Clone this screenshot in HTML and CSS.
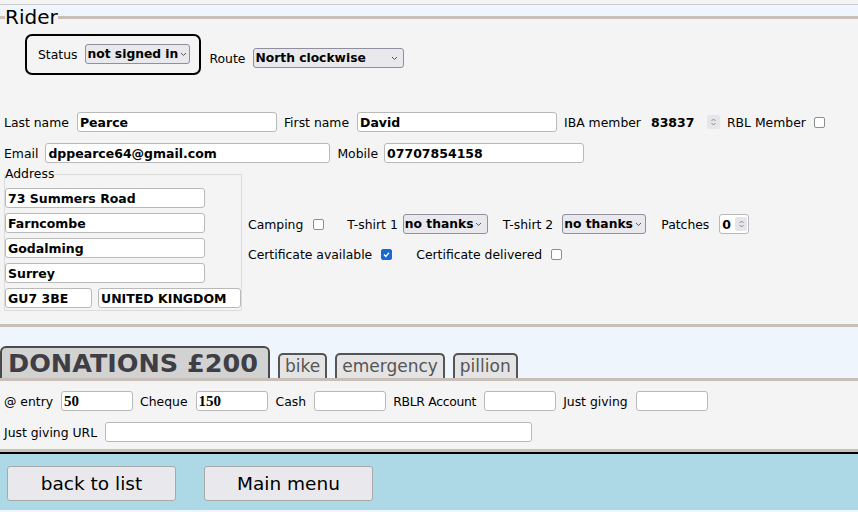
FILE: index.html
```html
<!DOCTYPE html>
<html>
<head>
<meta charset="utf-8">
<title>Rider</title>
<link rel="stylesheet" href="styles.css">
</head>
<body>
<div class="topstrip"></div>
<fieldset class="rider">
  <legend class="rider-legend">Rider</legend>
  <div class="statusrow">
    <div class="statusbox">
      <span class="lbl">Status</span>
      <span class="sel sel-status"><span class="sel-text">not signed in</span><svg class="chev" width="7" height="5" viewBox="0 0 7 5"><polyline points="1,1 3.5,3.5 6,1" fill="none" stroke="#555" stroke-width="1"/></svg></span>
    </div>
    <div class="routegrp">
      <span class="lbl">Route</span>
      <span class="sel sel-route"><span class="sel-text">North clockwise</span><svg class="chev" width="7" height="5" viewBox="0 0 7 5"><polyline points="1,1 3.5,3.5 6,1" fill="none" stroke="#555" stroke-width="1"/></svg></span>
    </div>
  </div>

  <div class="row row1">
    <span class="lbl">Last name</span><input class="txt w200 fld" value="Pearce">
    <span class="lbl">First name</span><input class="txt w200 fld" value="David">
    <span class="lbl lbl-iba">IBA member</span>
    <span class="numro fld"><span class="numval">83837</span><span class="spin"><svg width="7" height="10" viewBox="0 0 7 10"><polyline points="1.5,4 3.5,2 5.5,4" fill="none" stroke="#8a8a8a" stroke-width="1"/><polyline points="1.5,6 3.5,8 5.5,6" fill="none" stroke="#8a8a8a" stroke-width="1"/></svg></span></span>
    <span class="lbl lbl-rbl">RBL Member</span><span class="cb"></span>
  </div>

  <div class="row row2">
    <span class="lbl lbl-email">Email</span><input class="txt w-email fld" value="dppearce64@gmail.com">
    <span class="lbl lbl-mobile">Mobile</span><input class="txt w200 fld" value="07707854158">
  </div>

  <div class="addrsection">
    <fieldset class="address">
      <legend class="addr-legend">Address</legend>
      <input class="txt w200" value="73 Summers Road">
      <input class="txt w200" value="Farncombe">
      <input class="txt w200" value="Godalming">
      <input class="txt w200" value="Surrey">
      <div class="addr-last">
        <input class="txt w-pc" value="GU7 3BE">
        <input class="txt w-country" value="UNITED KINGDOM">
      </div>
    </fieldset>
    <div class="extras">
      <div class="xrow">
        <span class="lbl lbl-camping">Camping</span><span class="cb cb-gap"></span>
        <span class="lbl lbl-ts1">T-shirt 1</span><span class="sel sel-tshirt1 fld-ts1"><span class="sel-text">no thanks</span><svg class="chev" width="7" height="5" viewBox="0 0 7 5"><polyline points="1,1 3.5,3.5 6,1" fill="none" stroke="#555" stroke-width="1"/></svg></span>
        <span class="lbl lbl-ts2">T-shirt 2</span><span class="sel sel-tshirt2 fld-ts2"><span class="sel-text">no thanks</span><svg class="chev" width="7" height="5" viewBox="0 0 7 5"><polyline points="1,1 3.5,3.5 6,1" fill="none" stroke="#555" stroke-width="1"/></svg></span>
        <span class="lbl lbl-patches">Patches</span>
        <span class="numbox"><span class="numval">0</span><span class="spin spin-in"><svg width="7" height="10" viewBox="0 0 7 10"><polyline points="1.5,4 3.5,2 5.5,4" fill="none" stroke="#8a8a8a" stroke-width="1"/><polyline points="1.5,6 3.5,8 5.5,6" fill="none" stroke="#8a8a8a" stroke-width="1"/></svg></span></span>
      </div>
      <div class="xrow">
        <span class="lbl lbl-cert">Certificate available</span><span class="cb cb-on cb-gap2"><svg width="9" height="9" viewBox="0 0 9 9"><polyline points="2,4.6 3.8,6.4 7,2.8" fill="none" stroke="#fff" stroke-width="1.4"/></svg></span>
        <span class="lbl lbl-cert">Certificate delivered</span><span class="cb"></span>
      </div>
    </div>
  </div>
</fieldset>

<div class="tabs">
  <div class="tab tab-main">DONATIONS £200</div>
  <div class="tab tab-small">bike</div>
  <div class="tab tab-small">emergency</div>
  <div class="tab tab-small">pillion</div>
</div>
<div class="panel">
  <div class="row">
    <span class="lbl">@ entry</span><input class="txt serif w72 fld" value="50">
    <span class="lbl">Cheque</span><input class="txt serif w72 fld fld-wide" value="150">
    <span class="lbl">Cash</span><input class="txt serif w72 fld" value="">
    <span class="lbl lbl-rblr">RBLR Account</span><input class="txt serif w72 fld" value="">
    <span class="lbl">Just giving</span><input class="txt serif w72 fld" value="">
  </div>
  <div class="row row-url">
    <span class="lbl">Just giving URL</span><input class="txt w-url" value="">
  </div>
</div>
<div class="footer">
  <button class="btn">back to list</button>
  <button class="btn">Main menu</button>
</div>
</body>
</html>
```

FILE: styles.css
```css
html, body {
  margin: 0;
  padding: 0;
}
body {
  background: #eef5fd;
  font-family: "DejaVu Sans", Verdana, sans-serif;
  font-size: 12.4px;
  color: #000;
  width: 858px;
  overflow: hidden;
}
.topstrip {
  height: 4px;
  background: #f4f4f4;
  border-bottom: 1px solid #cbcbcb;
}
.rider {
  margin: 1px 0 0 0;
  padding: 0 0 13px 0;
  border: 3px solid #c8c0b8;
  border-left: 0;
  border-right: 0;
  background: #f4f4f4;
  min-width: 0;
}
.rider-legend {
  margin-left: 5px;
  padding: 0;
  font-size: 20px;
  line-height: 22px;
}
.txt {
  box-sizing: border-box;
  height: 20px;
  margin: 0;
  padding: 0 2px;
  border: 1px solid #b9b9b9;
  border-radius: 3px;
  background: #fff;
  font-family: "DejaVu Sans", Verdana, sans-serif;
  font-weight: bold;
  font-size: 12.5px;
  color: #000;
  outline: none;
}
.txt.serif {
  font-family: "Liberation Serif", "Times New Roman", serif;
  font-size: 15px;
}
.lbl {
  margin-right: 8px;
  white-space: nowrap;
  line-height: 15px;
  padding-top: 1px;
}
.row .fld { margin-right: 7px; }
.row .fld-wide { margin-right: 8px; }
.statusrow {
  display: flex;
  align-items: flex-start;
  padding-left: 25px;
  margin-top: 6px;
}
.statusbox {
  display: flex;
  align-items: center;
  border: 2px solid #000;
  border-radius: 7px;
  padding: 8px 9px 9px 11px;
  margin-right: 8px;
}
.routegrp {
  display: flex;
  align-items: center;
  margin-top: 14px;
}
.sel {
  display: inline-flex;
  align-items: center;
  justify-content: space-between;
  box-sizing: border-box;
  height: 20px;
  padding: 0 5px 0 1px;
  background: #e9e9ed;
  border: 1px solid #8f8f9d;
  border-radius: 3px;
  font-weight: bold;
  font-size: 12.3px;
  white-space: nowrap;
}
.chev { margin-left: 2px; flex: none; }
.sel-status { width: 105px; }
.sel-route { width: 151px; }
.sel-tshirt1 { width: 85px; }
.sel-tshirt2 { width: 84px; }
.row {
  display: flex;
  align-items: center;
  padding-left: 4px;
  height: 20px;
}
.row1 { margin-top: 37px; }
.row2 { margin-top: 11px; }
.w200 { width: 200px; }
.w-email { width: 285px; }
.w-pc { width: 87px; }
.w-country { width: 143px; }
.w72 { width: 72px; }
.w-url { width: 427px; }
.lbl-iba { margin-right: 10px; }
.lbl-rbl { margin-right: 8px; }
.lbl-email { margin-right: 7px; }
.lbl-mobile { margin-right: 6px; }
.lbl-camping { margin-right: 10px; }
.lbl-ts1 { margin-right: 5px; }
.lbl-ts2 { margin-right: 9px; }
.lbl-patches { margin-right: 10px; }
.lbl-cert { margin-right: 9px; }
.lbl-rblr { letter-spacing: -0.3px; }
.numro {
  display: inline-flex;
  align-items: center;
  width: 69px;
  height: 20px;
  font-weight: bold;
  font-size: 12.5px;
}
.numval { flex: 1; }
.spin {
  display: inline-flex;
  align-items: center;
  justify-content: center;
  width: 13px;
  height: 14px;
  background: #e6e6ea;
  border-radius: 2px;
}
.cb {
  display: inline-flex;
  align-items: center;
  justify-content: center;
  box-sizing: border-box;
  width: 11px;
  height: 11px;
  border: 1px solid #8d8d8d;
  border-radius: 2px;
  background: #fff;
  flex: none;
}
.cb-on {
  background: #1769d6;
  border-color: #1769d6;
}
.cb-gap { margin-right: 23px; }
.cb-gap2 { margin-right: 24px; }
.addrsection {
  display: flex;
  align-items: center;
  margin-top: 4px;
}
.address {
  margin: 0 0 0 4px;
  padding: 7px 0 2px 0;
  border: 1px solid #dcdcdc;
  display: flex;
  flex-direction: column;
  gap: 5px;
  min-width: 0;
}
.addr-legend {
  padding: 0;
  margin: 0;
  line-height: 14px;
}
.addr-last {
  display: flex;
  gap: 6px;
}
.extras {
  display: flex;
  flex-direction: column;
  gap: 10px;
  margin-left: 6px;
}
.xrow {
  display: flex;
  align-items: center;
  height: 20px;
}
.fld-ts1 { margin-right: 15px; }
.fld-ts2 { margin-right: 15px; }
.numbox {
  display: inline-flex;
  align-items: center;
  box-sizing: border-box;
  width: 30px;
  height: 20px;
  padding: 0 1px 0 2px;
  background: #fff;
  border: 1px solid #b9b9b9;
  border-radius: 3px;
  font-weight: bold;
  font-size: 12.5px;
}
.spin-in { width: 12px; }
.tabs {
  display: flex;
  align-items: flex-end;
  margin-top: 19px;
  gap: 8px;
}
.tab {
  box-sizing: border-box;
  border: 2px solid #4a4a4a;
  border-bottom: 0;
  border-radius: 6px 6px 0 0;
  white-space: nowrap;
}
.tab-main {
  width: 270px;
  height: 32px;
  padding: 0 0 0 6px;
  background: #d2d2d2;
  color: #3e3e44;
  font-weight: bold;
  font-size: 25.5px;
  line-height: 30px;
}
.tab-small {
  height: 25px;
  padding: 0 5px;
  background: #e4e4e4;
  color: #555;
  font-size: 17px;
  line-height: 23px;
  border-color: #555;
  border-radius: 5px 5px 0 0;
}
.panel {
  background: #f4f4f4;
  border-top: 3px solid #c8c0b8;
  border-bottom: 3px solid #c8c0b8;
  padding: 10px 0 7px 0;
}
.row-url { margin-top: 11px; }
.footer {
  box-sizing: border-box;
  background: #add8e6;
  border-top: 2px solid #000;
  padding: 12px 7px 0;
  display: flex;
  align-items: flex-start;
  gap: 28px;
  height: 58px;
}
.btn {
  box-sizing: border-box;
  width: 169px;
  height: 35px;
  margin: 0;
  padding: 0;
  background: #e9e9ed;
  border: 1px solid #a9a9a9;
  border-radius: 3px;
  font-family: "DejaVu Sans", Verdana, sans-serif;
  font-size: 18.5px;
  color: #000;
}
```
